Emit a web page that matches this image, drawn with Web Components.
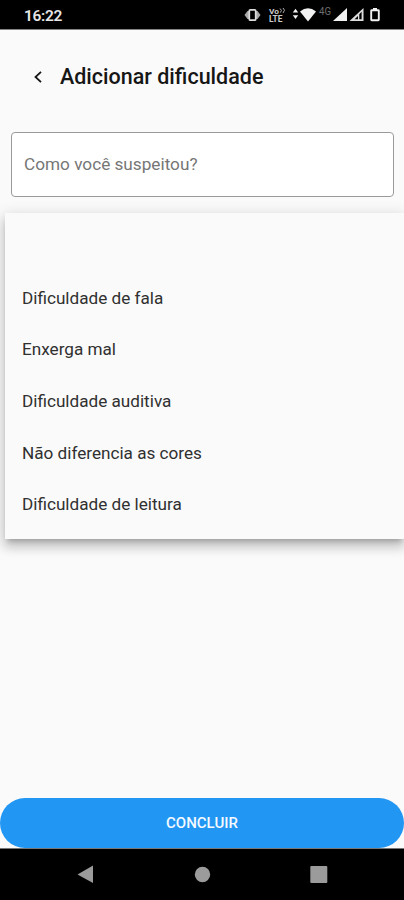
<!DOCTYPE html>
<html lang="pt-BR">
<head>
<meta charset="utf-8">
<meta name="viewport" content="width=device-width, initial-scale=1">
<title>Adicionar dificuldade</title>
<style>
  body {
    margin: 0;
    background: #fafafa;
    font-family: Roboto, "Liberation Sans", sans-serif;
    overflow: hidden;
  }
</style>
</head>
<body>
  <phone-screen>
    <status-bar slot="status" time="16:22"></status-bar>
    <app-header>Adicionar dificuldade</app-header>
    <select-field>Como você suspeitou?</select-field>
    <dropdown-menu>
      <menu-option></menu-option>
      <menu-option>Dificuldade de fala</menu-option>
      <menu-option>Enxerga mal</menu-option>
      <menu-option>Dificuldade auditiva</menu-option>
      <menu-option>Não diferencia as cores</menu-option>
      <menu-option>Dificuldade de leitura</menu-option>
    </dropdown-menu>
    <submit-button slot="footer">CONCLUIR</submit-button>
    <nav-bar slot="footer"></nav-bar>
  </phone-screen>

<script>
class BaseElement extends HTMLElement {
  constructor() {
    super();
    this.attachShadow({ mode: "open" });
    this.shadowRoot.innerHTML = this.render();
  }
}

class PhoneScreen extends BaseElement {
  render() {
    return `
      <style>
        :host {
          display: flex;
          flex-direction: column;
          height: 900px;
          overflow: hidden;
          background: #fafafa;
        }
        main { flex: 1; min-height: 0; }
      </style>
      <slot name="status"></slot>
      <main><slot></slot></main>
      <slot name="footer"></slot>`;
  }
}

class StatusBar extends BaseElement {
  render() {
    return `
      <style>
        :host {
          display: flex;
          justify-content: space-between;
          box-sizing: border-box;
          height: 30px;
          padding-left: 24px;
          background: #000;
          border-bottom: 1px solid #858585;
          color: #e8e8e8;
        }
        time {
          font-size: 15.500px;
          font-weight: 600;
          line-height: 32px;
          letter-spacing: -0.3px;
        }
        svg { display: block; width: 164px; height: 29px; }
        text { font-family: Roboto, sans-serif; }
      </style>
      <time>${this.getAttribute("time")}</time>
      <svg viewBox="240 0 164 29" fill="#f2f2f2">
        <!-- vibrate -->
        <path d="M244.500 15l3-4h2v8h-2zM260.500 15l-3-4h-2v8h2z" fill="#aaa"/>
        <rect x="249.300" y="9.800" width="6.400" height="10.400" rx="1" fill="#000" stroke="#ddd" stroke-width="1.700"/>
        <!-- VoLTE -->
        <text x="269" y="13.500" font-size="7.500" font-weight="700" textLength="10" lengthAdjust="spacingAndGlyphs" fill="#ccc">Vo</text>
        <path d="M280 8.500q2.500 1.500 .5 4M283 8q3 2 0 5" fill="none" stroke="#aaa"/>
        <text x="269" y="22" font-size="9" font-weight="700" textLength="13.500" lengthAdjust="spacingAndGlyphs" fill="#ccc">LTE</text>
        <!-- wifi with activity arrows -->
        <path d="M292.800 12.500l2.700-3.800 2.700 3.800zM292.800 15.300l2.700 3.800 2.700-3.800z"/>
        <path d="M300 11.500q8-6.500 16 0L308 21.500z"/>
        <text x="319" y="14.500" font-size="11" textLength="12" lengthAdjust="spacingAndGlyphs" fill="#6d6d6d">4G</text>
        <!-- signal strength -->
        <path d="M333 21L347 8v13z"/>
        <path d="M349.500 21L363.500 8v13zM359.300 14.200v5h2.300v-7.500z" fill-rule="evenodd" fill="#ddd"/>
        <path d="M354.500 19.200L358 16v3.200z" fill="#000"/>
        <!-- battery -->
        <path d="M373 8h4v2h-4z"/>
        <rect x="371.200" y="10.200" width="7.600" height="10" rx=".5" fill="none" stroke="#f2f2f2" stroke-width="1.900"/>
      </svg>`;
  }
}

class AppHeader extends BaseElement {
  render() {
    return `
      <style>
        :host {
          display: flex;
          align-items: center;
          height: 94px;
          padding-left: 34px;
          color: #161616;
        }
        svg { width: 8px; height: 12px; margin-right: 18px; }
        h1 {
          margin: 0;
          font-size: 21.500px;
          font-weight: 500;
          line-height: 24px;
        }
      </style>
      <svg viewBox="0 0 8 12" fill="none" stroke="#161616" stroke-width="1.800">
        <path d="M7 .8L1.500 6 7 11.200"/>
      </svg>
      <h1><slot></slot></h1>`;
  }
}

class SelectField extends BaseElement {
  render() {
    return `
      <style>
        :host {
          display: flex;
          align-items: center;
          box-sizing: border-box;
          height: 65px;
          margin: 8px 10px 0 11px;
          padding: 0 12px 2px;
          border: 1.5px solid #9a9a9a;
          border-radius: 4px;
          background: #fff;
          color: #767676;
          font-size: 17.200px;
        }
      </style>
      <slot></slot>`;
  }
}

class DropdownMenu extends BaseElement {
  render() {
    return `
      <style>
        :host {
          display: block;
          position: relative;
          margin: 16px 0 0 5px;
          padding: 7px 0 9px;
          background: #fafafa;
          box-shadow:
            0 5px 5px -3px rgba(0, 0, 0, .2),
            0 8px 10px 1px rgba(0, 0, 0, .14),
            0 3px 14px 2px rgba(0, 0, 0, .12);
        }
      </style>
      <slot></slot>`;
  }
}

class MenuOption extends BaseElement {
  render() {
    return `
      <style>
        :host {
          display: flex;
          align-items: center;
          height: 51.7px;
          padding: 0 17px;
          color: #303030;
          font-size: 17.150px;
        }
      </style>
      <slot></slot>`;
  }
}

class SubmitButton extends BaseElement {
  render() {
    return `
      <style>
        :host { display: block; }
        button {
          display: block;
          width: 100%;
          height: 50px;
          padding: 0;
          border: 0;
          border-radius: 25px;
          background: #2196f3;
          color: #f4faff;
          font: 500 15px Roboto, "Liberation Sans", sans-serif;
        }
      </style>
      <button><slot></slot></button>`;
  }
}

class NavBar extends BaseElement {
  render() {
    return `
      <style>
        :host {
          display: block;
          height: 51px;
          border-top: 1px solid #777;
          background: #000;
        }
        svg { display: block; width: 404px; height: 51px; }
      </style>
      <svg viewBox="0 849 404 51" fill="#9b9b9b">
        <path d="M77.500 874.500L93 865.500v17.500z"/>
        <circle cx="202.500" cy="874.500" r="7.700"/>
        <rect x="310.300" y="866" width="17" height="17" rx="1"/>
      </svg>`;
  }
}

customElements.define("phone-screen", PhoneScreen);
customElements.define("status-bar", StatusBar);
customElements.define("app-header", AppHeader);
customElements.define("select-field", SelectField);
customElements.define("dropdown-menu", DropdownMenu);
customElements.define("menu-option", MenuOption);
customElements.define("submit-button", SubmitButton);
customElements.define("nav-bar", NavBar);
</script>
</body>
</html>
